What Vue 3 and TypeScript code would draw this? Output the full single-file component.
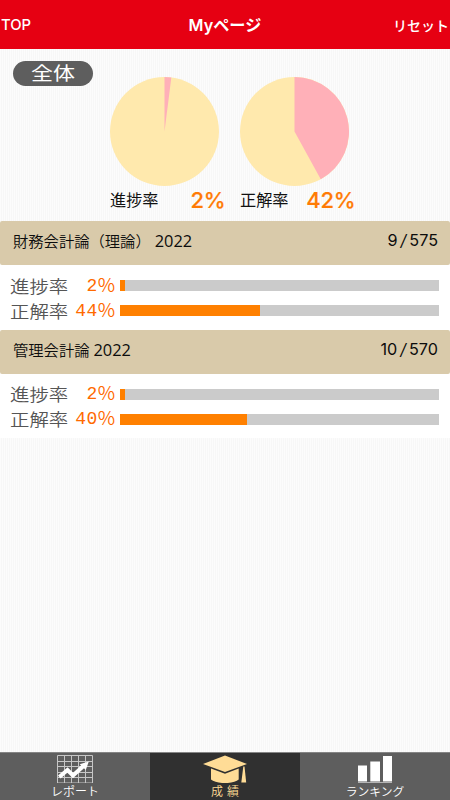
<script setup lang="ts">
interface Subject { name: string; done: number; total: number; progress: number; accuracy: number; progressBar: number; accuracyBar: number }

const subjects: Subject[] = [
  { name: '財務会計論（理論）', done: 9, total: 575, progress: 2, accuracy: 44, progressBar: 1.7, accuracyBar: 43.9 },
  { name: '管理会計論', done: 10, total: 570, progress: 2, accuracy: 40, progressBar: 1.7, accuracyBar: 39.8 },
]

function slice(percent: number): string {
  const a = (percent / 100) * Math.PI * 2
  const x = 54.5 + 54.5 * Math.sin(a)
  const y = 54.5 - 54.5 * Math.cos(a)
  return `M54.5 54.5V0A54.5 54.5 0 0 1 ${x.toFixed(2)} ${y.toFixed(2)}Z`
}

const charts = [
  { label: '進捗率', value: 2 },
  { label: '正解率', value: 42 },
]
</script>

<template>
  <div class="page">
    <header class="nav">
      <span class="nav-left">TOP</span>
      <h1 class="nav-title"><span class="my">My</span>ページ</h1>
      <span class="nav-right">リセット</span>
    </header>

    <section class="summary">
      <span class="badge"><span class="badge-text">全体</span></span>
      <div v-for="c in charts" :key="c.label" class="chart">
        <svg class="pie" viewBox="0 0 109 109">
          <circle cx="54.5" cy="54.5" r="54.5" fill="#ffe9ad" />
          <path :d="slice(c.value)" fill="#ffb0b8" />
        </svg>
        <div class="legend">
          <span class="legend-label">{{ c.label }}</span>
          <span class="legend-value">{{ c.value }}%</span>
        </div>
      </div>
    </section>

    <section v-for="s in subjects" :key="s.name" class="subject">
      <div class="subject-head">
        <div class="subject-title">
          <span class="subject-name">{{ s.name }}</span>
          <span class="year">2022</span>
        </div>
        <span class="count">{{ s.done }}<i>/</i>{{ s.total }}</span>
      </div>
      <div class="meters">
        <div class="meter">
          <span class="meter-label">進捗率</span>
          <div class="meter-value"><span>{{ s.progress }}</span><b>%</b></div>
          <div class="track"><div class="fill" :style="{ width: s.progressBar + '%' }"></div></div>
        </div>
        <div class="meter">
          <span class="meter-label">正解率</span>
          <div class="meter-value"><span>{{ s.accuracy }}</span><b>%</b></div>
          <div class="track"><div class="fill" :style="{ width: s.accuracyBar + '%' }"></div></div>
        </div>
      </div>
    </section>

    <nav class="tabs">
      <div class="tab">
        <svg class="icon" width="150" height="30" viewBox="0 0 150 30">
          <path d="M57.5 2.5H92.5V30H57.5ZM64.5 2.5V30M71.5 2.5V30M78.5 2.5V30M85.5 2.5V30M57.5 8.5H92.5M57.5 13.5H92.5M57.5 19.5H92.5M57.5 24.5H92.5" fill="none" stroke="#c6c6c6" stroke-width="1" />
          <path d="M59.3 24L67.5 17L73 22.5L84 12.5" fill="none" stroke="#fff" stroke-width="4" />
          <path d="M88.8 8.4L79.8 11.2L85.8 17Z" fill="#fff" />
        </svg>
        <span class="tab-label">レポート</span>
      </div>
      <div class="tab active">
        <svg class="icon" width="150" height="30" viewBox="0 0 150 30">
          <path d="M75 2.5L97 11L75 19L53 11Z" fill="#ffdc96" />
          <path d="M61 15.4L75 20.8L88.7 15.4V26.5C84 31.3 66 31.3 61 26.5Z" fill="#ffdc96" />
          <path d="M93.3 13.5H94.5L96.2 29.5H91.3Z" fill="#ffdc96" />
        </svg>
        <span class="tab-label grades">成績</span>
      </div>
      <div class="tab">
        <svg class="icon" width="150" height="30" viewBox="0 0 150 30">
          <path d="M58 12.5H67V28.5H58ZM70.3 8.5H80V28.5H70.3ZM83 3H92V28.5H83Z" fill="#fff" />
          <path d="M58 29.5H92" stroke="#b4b4b4" stroke-width="1" />
        </svg>
        <span class="tab-label ranking">ランキング</span>
      </div>
    </nav>
  </div>
</template>

<style>
body { margin: 0; }
</style>

<style scoped>
.page {
  width: 450px; height: 800px; display: flex; flex-direction: column; overflow: hidden;
  font-family: "Noto Sans CJK JP", sans-serif;
  background: repeating-linear-gradient(90deg, #fcfcfc 0 1px, #f7f7f7 1px 2px);
  white-space: nowrap;
}
.nav {
  height: 49px; flex: none; display: grid; grid-template-columns: 1fr auto 1fr; align-items: center;
  background: #e60012; color: #fff; box-sizing: border-box; padding: 0 1px;
}
.nav-left { font: 500 14.8px/20px Inter, sans-serif; }
.nav-title { margin: 0; font-size: 16.2px; line-height: 24px; font-weight: 700; }
.my { font-family: Inter, sans-serif; font-weight: 600; }
.nav-right { font-size: 14px; line-height: 20px; font-weight: 500; text-align: right; }
.summary { height: 172px; flex: none; display: flex; align-items: flex-start; }
.badge {
  margin: 12px 17px 0 13px; width: 80px; height: 25px; border-radius: 13px; background: #5e5e5e;
  color: #fff; text-align: center;
}
.badge-text { display: block; font-size: 22px; line-height: 25px; font-weight: 400; transform: translateY(-1px) scaleY(.82); }
.chart { width: 109px; margin-top: 28px; margin-right: 21px; }
.pie { display: block; width: 109px; height: 109px; }
.legend { width: 115.5px; height: 28px; display: flex; justify-content: space-between; align-items: flex-start; }
.legend-label { font-size: 16.2px; line-height: 27px; color: #111; }
.legend-value { font: 500 22px/28px Inter, sans-serif; color: #ff7b05; letter-spacing: -.2px; -webkit-text-stroke: .2px #ff7b05; }
.subject { height: 108.6px; flex: none; background: #fff; }
.subject-head {
  height: 44px; background: #d9caaa; border-radius: 2px; display: flex; justify-content: space-between;
  padding: 0 12px 0 13px; color: #0c0c0c;
}
.subject-title { display: flex; align-items: flex-start; }
.subject-name { font-size: 15.3px; line-height: 38px; font-weight: 350; }
.year { font: 400 16.4px/39px "Open Sans", sans-serif; margin-left: 4px; }
.count { font: 400 16.2px/39px Inter, sans-serif; }
.count i { margin: 0 3px; }
.meters { padding: 8px 11px 0 10px; }
.meter { height: 25px; display: grid; grid-template: 25px / 59px 51px 1fr; align-items: center; }
.meter-label { font-size: 19.4px; line-height: 24px; height: 24px; color: #555; font-weight: 350; transform: scaleY(.88); }
.meter-value { height: 24px; display: flex; justify-content: flex-end; padding-right: 5px; color: #ff6a00; }
.meter-value span { font: 400 18px/24px "Liberation Mono", monospace; letter-spacing: .4px; }
.meter-value b { font: 350 19px/20px "Noto Sans CJK JP", sans-serif; }
.track { height: 11px; background: #cbcbcb; }
.fill { height: 11px; background: #ff8000; }
.tabs { height: 48px; flex: none; margin-top: auto; display: flex; border-top: 1px solid #858585; box-sizing: border-box; }
.tab { width: 150px; background: #5e5e5e; color: #fff; display: flex; flex-direction: column; align-items: center; }
.active { background: #303030; color: #ffdc96; }
.icon { display: block; flex: none; }
.tab-label { font-size: 12px; line-height: 16px; font-weight: 350; }
.grades { letter-spacing: 4px; margin-right: -4px; line-height: 15px; }
.ranking { font-size: 11.8px; line-height: 15px; }
</style>
